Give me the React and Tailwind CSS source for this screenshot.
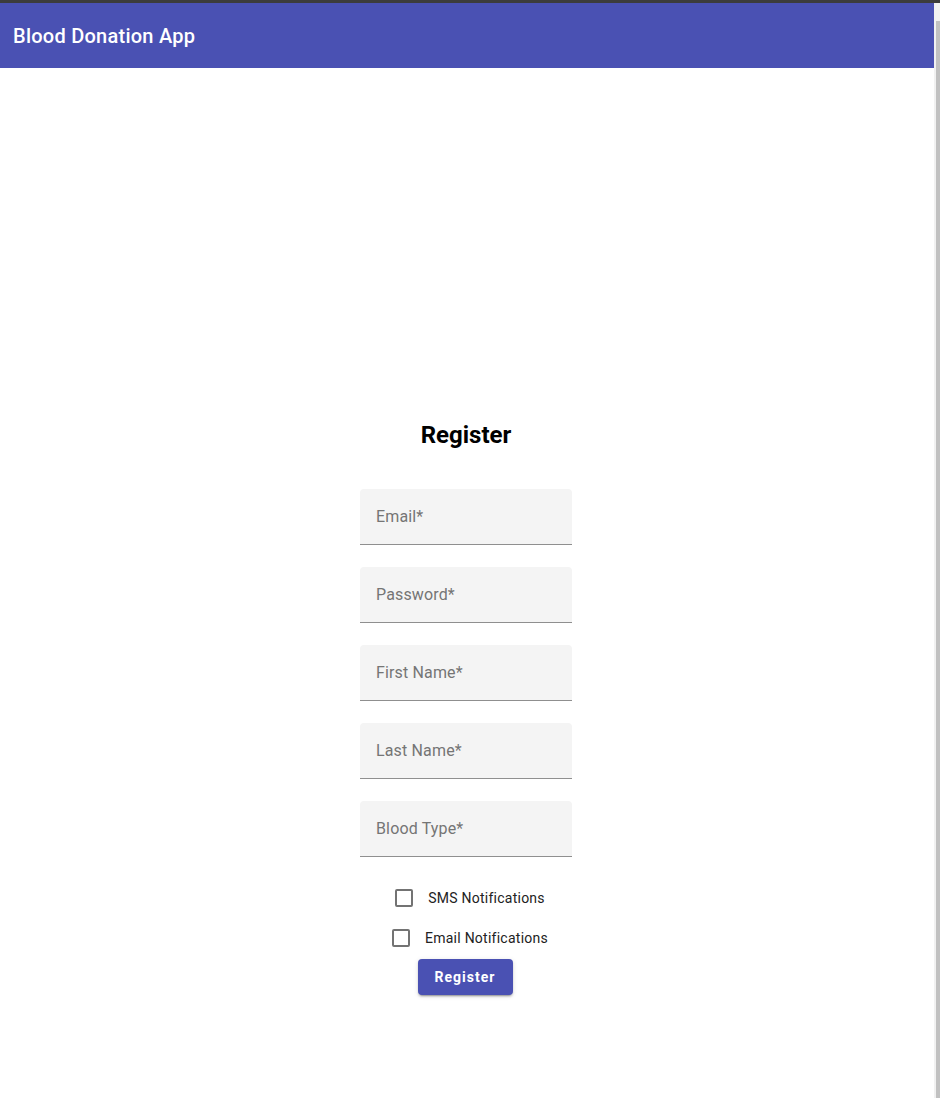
import { useState } from "react";

const fields = ["Email*", "Password*", "First Name*", "Last Name*", "Blood Type*"];

function Field({ label }) {
  return (
    <div className="w-[212px] h-14 bg-[#f4f4f4] rounded-t-[4px] border-b border-[#8f8f8f] flex items-center pl-4">
      <span className="text-base text-[#757575] tracking-[0.15px]">{label}</span>
    </div>
  );
}

function CheckRow({ label, checked, onToggle }) {
  return (
    <div className="h-10 flex justify-center items-center">
      <label className="flex items-center gap-[15px] ml-2 cursor-pointer" onClick={onToggle}>
        <span
          className={`w-[18px] h-[18px] rounded-[2px] border-2 ${
            checked ? "bg-[#4a51b3] border-[#4a51b3]" : "border-[#737373]"
          }`}
        />
        <span className="text-sm text-[#222] tracking-[0.25px]">{label}</span>
      </label>
    </div>
  );
}

export default function App() {
  const [sms, setSms] = useState(false);
  const [email, setEmail] = useState(false);

  return (
    <div className="h-[1098px] overflow-hidden flex flex-col bg-white font-['Roboto',sans-serif]">
      <div className="h-[3px] bg-[#3c3c3c]" />
      <div className="flex flex-1">
        <div className="flex-1 flex flex-col">
          {/* App bar */}
          <header className="h-[65px] bg-[#4a51b3] flex items-center pl-[13px]">
            <h1 className="text-white text-xl font-medium tracking-[0.25px]">Blood Donation App</h1>
          </header>

          {/* Register form */}
          <div className="flex flex-col items-center pt-[351px] pr-[2px]">
            <h2 className="text-2xl leading-8 font-bold text-black">Register</h2>
            <div className="mt-[38px] flex flex-col gap-[22px]">
              {fields.map((f) => (
                <Field key={f} label={f} />
              ))}
            </div>
            <div className="mt-[21px] flex flex-col">
              <CheckRow label="SMS Notifications" checked={sms} onToggle={() => setSms(!sms)} />
              <CheckRow label="Email Notifications" checked={email} onToggle={() => setEmail(!email)} />
            </div>
            <button className="mt-px mr-[2px] w-[95px] h-9 rounded-[4px] bg-[#4a51b3] text-white text-sm font-bold tracking-[1px] shadow-[0_3px_1px_-2px_rgba(0,0,0,0.2),0_2px_2px_0_rgba(0,0,0,0.14),0_1px_5px_0_rgba(0,0,0,0.12)]">
              Register
            </button>
          </div>
        </div>

        {/* scrollbar */}
        <div className="w-[6px] bg-[#f1f1f1] flex flex-col">
          <div className="h-[18px]" />
          <div className="flex-1 ml-[2px] bg-[#c1c1c1]" />
        </div>
      </div>
    </div>
  );
}
